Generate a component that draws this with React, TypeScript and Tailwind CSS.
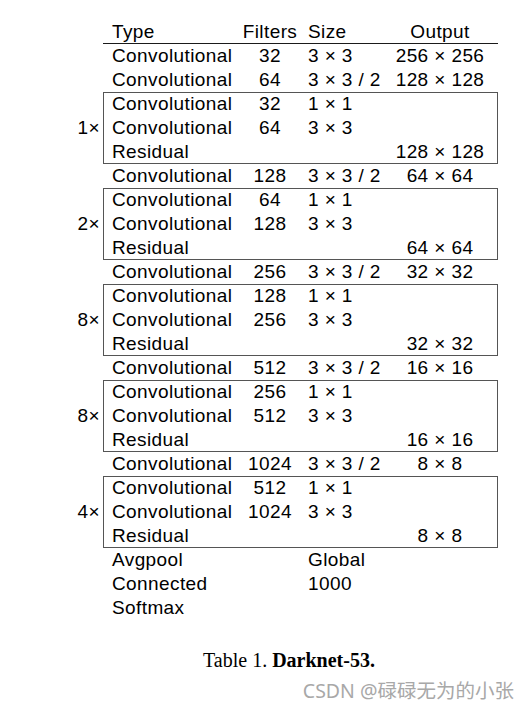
import React from "react";

type Row = [string, string, string, string];
type Group = { mult?: string; rows: Row[] };

const groups: Group[] = [
  { rows: [["Convolutional", "32", "3 × 3", "256 × 256"], ["Convolutional", "64", "3 × 3 / 2", "128 × 128"]] },
  { mult: "1×", rows: [["Convolutional", "32", "1 × 1", ""], ["Convolutional", "64", "3 × 3", ""], ["Residual", "", "", "128 × 128"]] },
  { rows: [["Convolutional", "128", "3 × 3 / 2", "64 × 64"]] },
  { mult: "2×", rows: [["Convolutional", "64", "1 × 1", ""], ["Convolutional", "128", "3 × 3", ""], ["Residual", "", "", "64 × 64"]] },
  { rows: [["Convolutional", "256", "3 × 3 / 2", "32 × 32"]] },
  { mult: "8×", rows: [["Convolutional", "128", "1 × 1", ""], ["Convolutional", "256", "3 × 3", ""], ["Residual", "", "", "32 × 32"]] },
  { rows: [["Convolutional", "512", "3 × 3 / 2", "16 × 16"]] },
  { mult: "8×", rows: [["Convolutional", "256", "1 × 1", ""], ["Convolutional", "512", "3 × 3", ""], ["Residual", "", "", "16 × 16"]] },
  { rows: [["Convolutional", "1024", "3 × 3 / 2", "8 × 8"]] },
  { mult: "4×", rows: [["Convolutional", "512", "1 × 1", ""], ["Convolutional", "1024", "3 × 3", ""], ["Residual", "", "", "8 × 8"]] },
  { rows: [["Avgpool", "", "Global", ""], ["Connected", "", "1000", ""], ["Softmax", "", "", ""]] },
];

function RowView({ r, header }: { r: Row; header?: boolean }) {
  return (
    <div
      className={
        "grid grid-cols-[137px_60px_82px_116px] h-[24px] leading-[24px] whitespace-nowrap" +
        (header ? " border-b border-[#1a1a1a]" : "")
      }
    >
      <div className="pl-[9px]">{r[0]}</div>
      <div className="text-center">{r[1]}</div>
      <div className="pl-[8px]">{r[2]}</div>
      <div className="text-center">{r[3]}</div>
    </div>
  );
}

export default function App() {
  return (
    <div className="w-[532px] h-[711px] bg-white pt-[20px] text-black font-['Liberation_Sans',Arial,sans-serif] text-[19px] tracking-[0.4px]">
      <div className="flex">
        <div className="w-[103px]" />
        <div className="w-[395px]">
          <RowView r={["Type", "Filters", "Size", "Output"]} header />
        </div>
      </div>
      {groups.map((g, i) => (
        <div key={i} className="flex">
          <div className="w-[103px] flex items-center justify-end pr-[3px] leading-[24px]">
            {g.mult ?? ""}
          </div>
          <div
            className={
              "w-[395px]" + (g.mult ? " shadow-[inset_0_0_0_1px_#555555]" : "")
            }
          >
            {g.rows.map((r, j) => (
              <RowView key={j} r={r} />
            ))}
          </div>
        </div>
      ))}
      <div className="mt-[28px] pl-[203px] h-[24px] leading-[24px] font-['Liberation_Serif','Times_New_Roman',serif] text-[20px] tracking-normal whitespace-nowrap">
        Table 1. <span className="font-bold">Darknet-53.</span>
      </div>
      <div className="mt-[9px] pr-[18px] text-right leading-[20px] text-[19.5px] tracking-normal text-[#a8a8a8] font-['Noto_Sans','Noto_Sans_CJK_SC',sans-serif] whitespace-nowrap">
        CSDN @碌碌无为的小张
      </div>
    </div>
  );
}
